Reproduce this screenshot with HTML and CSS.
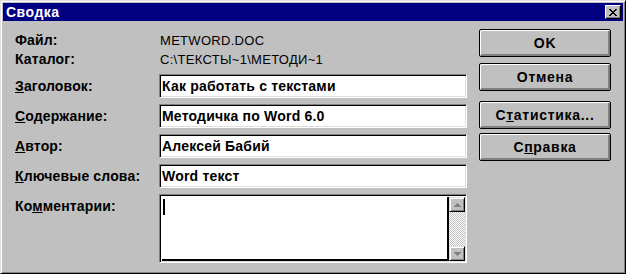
FILE: index.html
```html
<!DOCTYPE html>
<html lang="ru">
<head>
  <meta charset="UTF-8">
  <title>Сводка</title>
  <link rel="stylesheet" href="styles.css">
</head>
<body>
  <div class="window">
    <div class="titlebar">
      <span class="title">Сводка</span>
      <div class="close-btn">
        <svg width="8" height="7" viewBox="0 0 8 7">
          <path d="M0 0h2v1h1v1h2v-1h1v-1h2v1h-1v1h-1v1h-1v1h1v1h1v1h1v1h-2v-1h-1v-1h-2v1h-1v1h-2v-1h1v-1h1v-1h1v-1h-1v-1h-1v-1h-1z" fill="#000"/>
        </svg>
      </div>
    </div>

    <div class="content">
      <div class="form">
        <div class="info">
          <span class="label">Файл:</span>
          <span class="value">METWORD.DOC</span>
          <span class="label">Каталог:</span>
          <span class="value">C:\ТЕКСТЫ~1\МЕТОДИ~1</span>
        </div>

        <div class="fields">
          <label class="label"><u>З</u>аголовок:</label>
          <div class="field">Как работать с текстами</div>

          <label class="label"><u>С</u>одержание:</label>
          <div class="field">Методичка по Word 6.0</div>

          <label class="label"><u>А</u>втор:</label>
          <div class="field">Алексей Бабий</div>

          <label class="label"><u>К</u>лючевые слова:</label>
          <div class="field">Word текст</div>

          <label class="label label-top">Ко<u>м</u>ментарии:</label>
          <div class="memo">
            <div class="memo-text"><span class="caret"></span></div>
            <div class="scrollbar">
              <div class="scroll-btn">
                <svg width="7" height="4" viewBox="0 0 7 4"><path d="M3 0h1v1h1v1h1v1h1v1h-7v-1h1v-1h1v-1h1z" fill="#808080"/></svg>
              </div>
              <div class="scroll-track"></div>
              <div class="scroll-btn">
                <svg width="7" height="4" viewBox="0 0 7 4"><path d="M0 0h7v1h-1v1h-1v1h-1v1h-1v-1h-1v-1h-1v-1h-1z" fill="#808080"/></svg>
              </div>
            </div>
          </div>
        </div>
      </div>

      <div class="buttons">
        <div class="btn">OK</div>
        <div class="btn">Отмена</div>
        <div class="btn btn-gap">С<u>т</u>атистика...</div>
        <div class="btn btn-last">С<u>п</u>равка</div>
      </div>
    </div>
  </div>
</body>
</html>
```

FILE: styles.css
```css
* {
  box-sizing: border-box;
}
body {
  margin: 0;
  background-color: #c0c0c0;
  font-family: "Liberation Sans", Arial, sans-serif;
  font-size: 13px;
  color: #000;
}
.window {
  width: 626px;
  height: 274px;
  background-color: #c0c0c0;
  border: 1px solid;
  border-color: #dfdfdf #000 #000 #dfdfdf;
  box-shadow: inset 1px 1px #fff, inset -1px -1px #808080;
  padding: 2px;
}
.titlebar {
  height: 18px;
  background-color: #000080;
  display: flex;
  align-items: center;
  justify-content: space-between;
  padding: 0 2px 0 3px;
}
.title {
  color: #fff;
  font-weight: bold;
  font-size: 14px;
  letter-spacing: 0.5px;
}
.close-btn {
  width: 16px;
  height: 14px;
  background-color: #c0c0c0;
  border: 1px solid;
  border-color: #fff #000 #000 #fff;
  box-shadow: inset -1px -1px #808080;
  display: flex;
  align-items: center;
  justify-content: center;
  padding-right: 1px;
}
.content {
  display: flex;
  padding: 8px 0 0 12px;
}
.form {
  width: 452px;
}
.info {
  display: grid;
  grid-template-columns: 145px 1fr;
  line-height: 19px;
  margin-top: 2px;
}
.info .value {
  font-size: 13px;
  letter-spacing: 0.3px;
}
.label {
  font-weight: bold;
  font-size: 14px;
  letter-spacing: 0.15px;
}
.fields {
  display: grid;
  grid-template-columns: 144px 308px;
  row-gap: 6px;
  margin-top: 5px;
  align-items: center;
}
.label-top {
  align-self: start;
  padding-top: 4px;
}
.field {
  height: 24px;
  background-color: #fff;
  border: 1px solid;
  border-color: #808080 #fff #fff #808080;
  box-shadow: inset 1px 1px #000, inset -1px -1px #dfdfdf;
  padding: 0 2px;
  font-weight: bold;
  font-size: 14px;
  letter-spacing: 0.2px;
  line-height: 22px;
}
.memo {
  height: 69px;
  display: flex;
  background-color: #fff;
  border: 1px solid;
  border-color: #808080 #fff #fff #808080;
  box-shadow: inset 1px 1px #000, inset -1px -1px #dfdfdf;
  padding: 2px 1px 1px 2px;
}
.memo-text {
  flex: 1;
  padding: 2px 1px;
  border-right: 2px solid #000;
  border-bottom: 2px solid #000;
}
.caret {
  display: block;
  width: 2px;
  height: 16px;
  background-color: #000;
}
.scrollbar {
  width: 16px;
  display: flex;
  flex-direction: column;
}
.scroll-btn {
  height: 15px;
  background-color: #c0c0c0;
  border: 1px solid;
  border-color: #dfdfdf #000 #000 #dfdfdf;
  box-shadow: inset 1px 1px #fff, inset -1px -1px #808080;
  display: flex;
  align-items: center;
  justify-content: center;
}
.scroll-track {
  flex: 1;
  background: repeating-conic-gradient(#c0c0c0 0 25%, #fff 0 50%) 0 0 / 2px 2px;
}
.buttons {
  display: flex;
  flex-direction: column;
  gap: 6px;
  margin-left: 12px;
}
.btn {
  width: 132px;
  height: 28px;
  border: 1px solid #000;
  border-radius: 2px;
  box-shadow: inset 1px 1px #fff, inset -1px -1px #808080, inset -2px -2px #808080;
  display: flex;
  align-items: center;
  justify-content: center;
  font-weight: bold;
  font-size: 14px;
  letter-spacing: 0.7px;
}
.btn-gap {
  margin-top: 4px;
}
.btn-last {
  margin-top: -2px;
}
```
